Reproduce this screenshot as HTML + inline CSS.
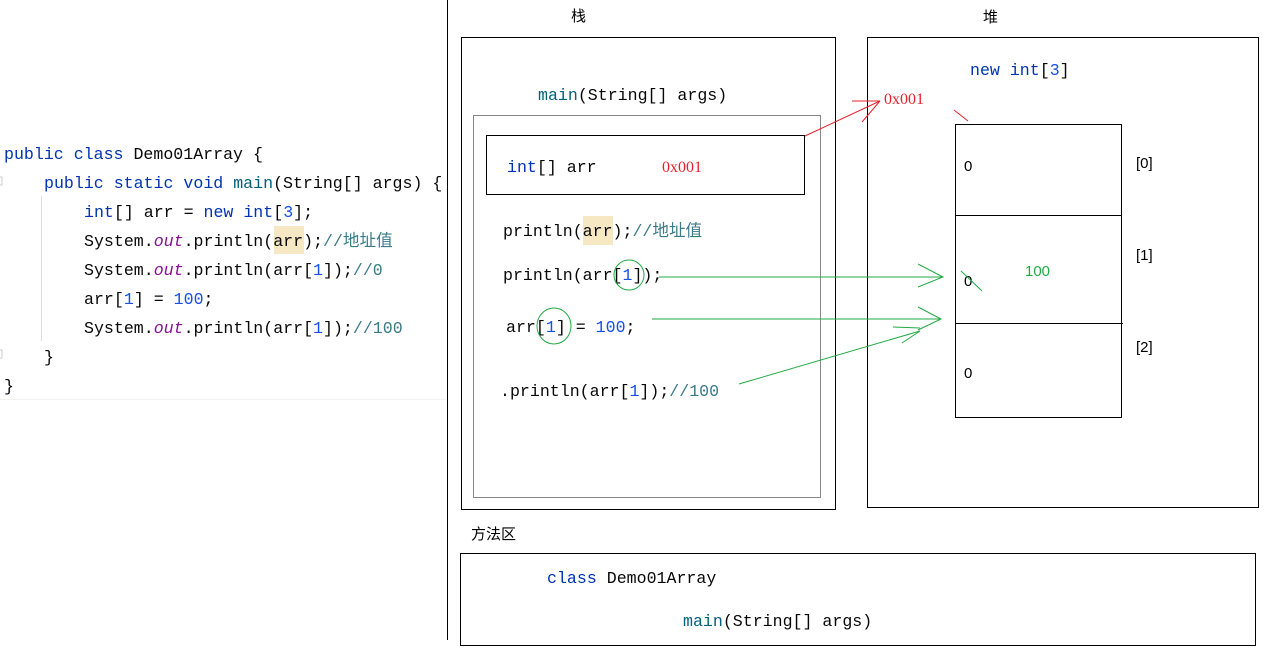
<!DOCTYPE html>
<html><head><meta charset="utf-8"><style>
html,body{margin:0;padding:0;background:#fff;width:1269px;height:650px;overflow:hidden}
svg{display:block}
.c{font-family:"Liberation Mono","Noto Sans CJK SC",monospace;font-size:16.6px;fill:#080808}
.k{fill:#0033b3}.m{fill:#00627a}.o{fill:#871094;font-style:italic}.n{fill:#1750eb}.cm{fill:#3a7b88}
.s{font-family:"Liberation Sans","Noto Sans CJK SC",sans-serif;font-size:15px;fill:#000}
.r{font-family:"Liberation Serif",serif;font-size:16px;fill:#e8202a}
</style></head><body>
<svg width="1269" height="650" xmlns="http://www.w3.org/2000/svg">
<rect x="0" y="0" width="447" height="400" fill="#fff"/>
<line x1="0" y1="399.5" x2="447" y2="399.5" stroke="#f2f2ee"/>
<line x1="41.5" y1="196" x2="41.5" y2="341" stroke="#e0e0e0"/>
<rect x="-3" y="177" width="5" height="8" fill="none" stroke="#ccc"/>
<rect x="-3" y="350" width="5" height="8" fill="none" stroke="#ccc"/>
<g class="c">
<text x="4" y="159"><tspan class="k">public class</tspan> Demo01Array {</text>
<text x="44" y="188"><tspan class="k">public static void</tspan> <tspan class="m">main</tspan>(String[] args) {</text>
<text x="84" y="217"><tspan class="k">int</tspan>[] arr = <tspan class="k">new int</tspan>[<tspan class="n">3</tspan>];</text>
<rect x="274" y="226" width="30" height="28" fill="#f5e8c2"/>
<text x="84" y="246">System.<tspan class="o">out</tspan>.println(arr);<tspan class="cm">//地址值</tspan></text>
<text x="84" y="275">System.<tspan class="o">out</tspan>.println(arr[<tspan class="n">1</tspan>]);<tspan class="cm">//0</tspan></text>
<text x="84" y="304">arr[<tspan class="n">1</tspan>] = <tspan class="n">100</tspan>;</text>
<text x="84" y="333">System.<tspan class="o">out</tspan>.println(arr[<tspan class="n">1</tspan>]);<tspan class="cm">//100</tspan></text>
<text x="44" y="362">}</text>
<text x="4" y="391">}</text>
</g>
<line x1="447.5" y1="0" x2="447.5" y2="640" stroke="#000"/>
<text class="s" x="571" y="21">栈</text>
<text class="s" x="983" y="22">堆</text>
<text class="s" x="471" y="539">方法区</text>
<g fill="none" stroke="#000">
<rect x="461.5" y="37.5" width="374" height="472"/>
<rect x="473.5" y="115.5" width="347" height="382" stroke="#888"/>
<rect x="486.5" y="135.5" width="318" height="59"/>
<rect x="867.5" y="37.5" width="391" height="470"/>
<rect x="955.5" y="124.5" width="166" height="293"/>
<line x1="955" y1="215.5" x2="1122" y2="215.5"/>
<line x1="955" y1="323.5" x2="1123" y2="323.5"/>
<rect x="460.5" y="553.5" width="795" height="92"/>
</g>
<g class="c">
<text x="538" y="100"><tspan class="m">main</tspan>(String[] args)</text>
<text x="507" y="172"><tspan class="k">int</tspan>[] arr</text>
<rect x="583" y="216" width="30" height="29" fill="#f5e8c2"/>
<text x="503" y="236">println(arr);<tspan class="cm">//地址值</tspan></text>
<text x="503" y="280">println(arr[<tspan class="n">1</tspan>]);</text>
<text x="506" y="332">arr[<tspan class="n">1</tspan>] = <tspan class="n">100</tspan>;</text>
<text x="500" y="396">.println(arr[<tspan class="n">1</tspan>]);<tspan class="cm">//100</tspan></text>
<text x="970" y="75"><tspan class="k">new int</tspan>[<tspan class="n">3</tspan>]</text>
<text x="547" y="583"><tspan class="k">class</tspan> Demo01Array</text>
<text x="683" y="626"><tspan class="m">main</tspan>(String[] args)</text>
</g>
<text class="r" x="662" y="172">0x001</text>
<text class="r" x="884" y="104">0x001</text>
<g font-family="Liberation Sans,sans-serif" font-size="15" fill="#000">
<text x="964" y="171">0</text><text x="964" y="286">0</text><text x="964" y="378">0</text>
<text x="1136" y="168">[0]</text><text x="1136" y="260">[1]</text><text x="1136" y="352">[2]</text>
</g>
<text x="1025" y="276" font-family="Liberation Sans,sans-serif" font-size="15" fill="#22aa44">100</text>
<g fill="none" stroke="#e8202a" stroke-width="1">
<line x1="805" y1="136" x2="880" y2="101"/>
<line x1="852" y1="101" x2="880" y2="101"/>
<line x1="862" y1="122" x2="880" y2="101"/>
<line x1="954" y1="110" x2="968" y2="121"/>
</g>
<g fill="none" stroke="#22aa44" stroke-width="1">
<circle cx="629" cy="275" r="15"/>
<ellipse cx="554" cy="326" rx="17" ry="18"/>
<line x1="659" y1="277" x2="943" y2="277"/>
<polyline points="918,264 943,277 918,287"/>
<line x1="652" y1="319" x2="941" y2="319"/>
<polyline points="918,307 941,319 918,330"/>
<line x1="739" y1="384" x2="920" y2="331"/>
<line x1="893" y1="327" x2="920" y2="328"/>
<line x1="902" y1="343" x2="920" y2="331"/>
<line x1="961" y1="271" x2="982" y2="291"/>
</g>
</svg>
</body></html>
